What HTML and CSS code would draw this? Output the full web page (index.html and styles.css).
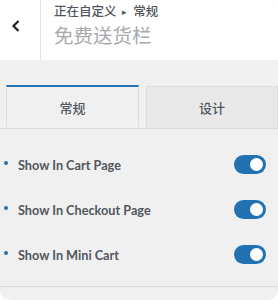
FILE: index.html
```html
<!DOCTYPE html>
<html lang="zh-CN">
<head>
    <meta charset="UTF-8">
    <meta name="viewport" content="width=device-width, initial-scale=1.0">
    <title>免费送货栏</title>
    <link rel="stylesheet" href="styles.css">
</head>
<body>
    <div class="panel">
        <div class="header">
            <button class="back" type="button" aria-label="返回">
                <svg width="12" height="14" viewBox="0 0 12 14">
                    <path d="M8.5 2 L3.5 7 L8.5 12" fill="none" stroke="#1d2327" stroke-width="2.2"/>
                </svg>
            </button>
            <div class="titles">
                <div class="crumb">正在自定义 <span class="sep">▸</span> 常规</div>
                <div class="title">免费送货栏</div>
            </div>
        </div>

        <div class="tabs">
            <div class="tab active">常规</div>
            <div class="tab">设计</div>
        </div>

        <ul class="options">
            <li class="option">
                <span class="label">Show In Cart Page</span>
                <span class="toggle"><span class="knob"></span></span>
            </li>
            <li class="option">
                <span class="label">Show In Checkout Page</span>
                <span class="toggle"><span class="knob"></span></span>
            </li>
            <li class="option">
                <span class="label">Show In Mini Cart</span>
                <span class="toggle"><span class="knob"></span></span>
            </li>
        </ul>
        <div class="footer"></div>
    </div>
</body>
</html>
```

FILE: styles.css
```css
body {
    margin: 0;
    background: #ffffff;
    font-family: "Noto Sans", "Noto Sans CJK SC", sans-serif;
}
.panel {
    height: 300px;
    background: #f0f0f1;
    border-radius: 10px;
    overflow: hidden;
}
.header {
    display: flex;
    height: 60px;
    background: #ffffff;
}
.back {
    width: 41px;
    border: none;
    border-right: 1px solid #e4e4e6;
    background: #ffffff;
    padding: 0;
    display: flex;
    align-items: center;
    justify-content: center;
    padding-right: 8px;
    padding-bottom: 8px;
}
.titles {
    padding: 2px 0 0 13px;
}
.crumb {
    font-family: "Noto Sans CJK SC", sans-serif;
    font-size: 12.5px;
    font-weight: 500;
    line-height: 18px;
    color: #50575e;
}
.sep {
    font-size: 9px;
    margin: 0 3px;
    vertical-align: 1px;
}
.title {
    font-family: "Noto Sans CJK SC", sans-serif;
    font-size: 19.5px;
    line-height: 28px;
    color: #a7aaad;
}
.tabs {
    display: grid;
    grid-template-columns: 133px 132px;
    column-gap: 7px;
    margin-top: 25px;
    padding-left: 6px;
    border-bottom: 1px solid #dcdcde;
}
.tab {
    height: 41px;
    margin-top: 1px;
    display: flex;
    align-items: center;
    justify-content: center;
    font-family: "Noto Sans CJK SC", sans-serif;
    font-size: 13px;
    font-weight: 500;
    color: #50575e;
    background: #e9e9ea;
    border: 1px solid #dcdcde;
    border-bottom: none;
}
.tab.active {
    margin-top: 0;
    height: 40px;
    background: #f0f0f1;
    border-top: 2px solid #2271b1;
}
.options {
    list-style: none;
    margin: 0;
    padding: 13px 0 9px;
    border-bottom: 1px solid #dcdcde;
}
.option {
    display: flex;
    align-items: center;
    justify-content: space-between;
    height: 45px;
    padding: 0 12px 0 18px;
    position: relative;
}
.option::before {
    content: "";
    position: absolute;
    left: 4px;
    top: 19px;
    width: 4px;
    height: 4px;
    border-radius: 50%;
    background: #2271b1;
}
.label {
    font-family: Lato, "Noto Sans", sans-serif;
    font-size: 12.7px;
    font-weight: 700;
    color: #50575e;
}
.toggle {
    width: 32px;
    height: 19px;
    border-radius: 10px;
    background: #2271b1;
    display: flex;
    align-items: center;
    justify-content: flex-end;
    padding-right: 3px;
    box-sizing: border-box;
}
.knob {
    width: 13px;
    height: 13px;
    border-radius: 50%;
    background: #ffffff;
}
```
